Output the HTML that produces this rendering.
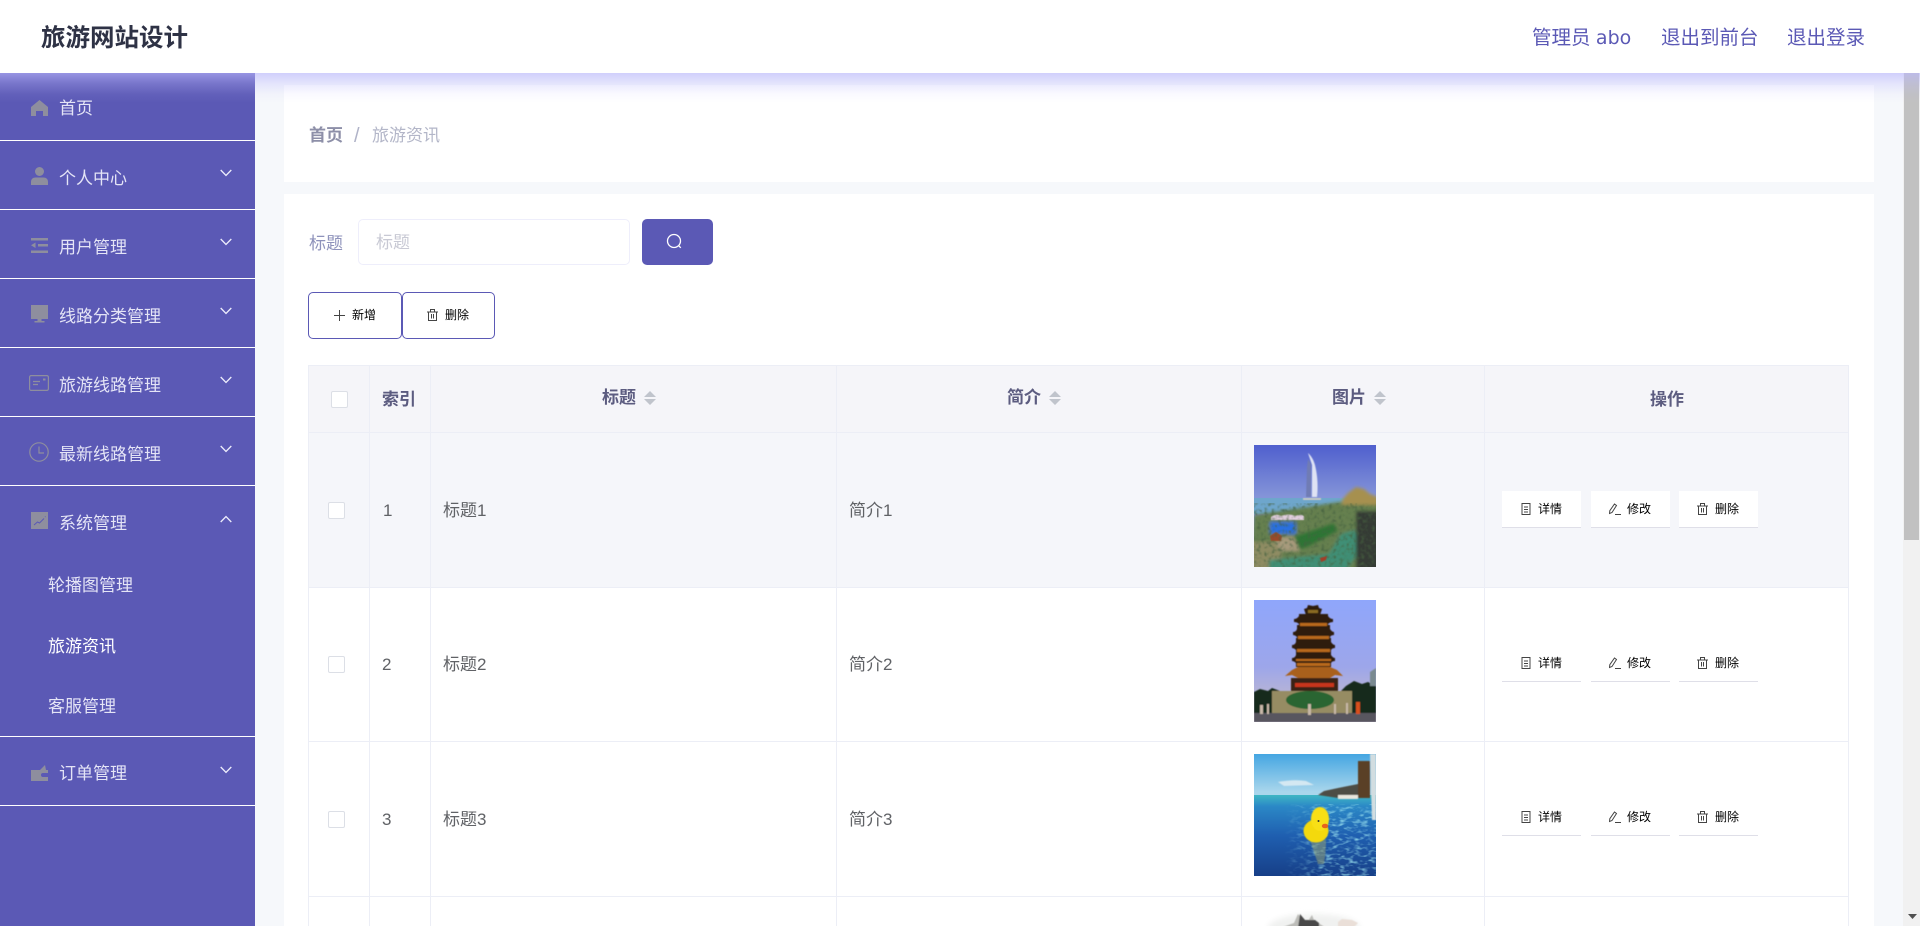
<!DOCTYPE html>
<html lang="zh"><head><meta charset="utf-8"><title>旅游网站设计</title>
<style>
*{box-sizing:border-box}
html,body{margin:0;padding:0;width:1920px;height:926px;overflow:hidden;background:#f6f8fb;font-family:"WenQuanYi Zen Hei","Liberation Sans","Noto Sans CJK SC",sans-serif}
#root{position:relative;width:1920px;height:926px;overflow:hidden;background:#f6f8fb}
.a,.t{position:absolute}
.t{white-space:nowrap;line-height:24px;font-size:17px}
.side{left:0;top:73px;width:255px;height:853px;background:#5b59b5}
.ln{left:0;width:255px;height:1px;background:#fff}
.s{left:59px;color:#e4e4f6}
.sub{left:48px;color:#e4e4f6}
.ic{position:absolute;fill:#8e8e9e}
.chev{position:absolute;left:220px;fill:none;stroke:#eeeefc;stroke-width:1.3}
.card{background:#fff;left:284px;width:1590px}
.th{font-weight:700;color:#5c5c80;font-size:17px}
.hl{background:#eceef6;width:1px}
.hh{background:#eceef6;height:1px;left:308px;width:1541px}
.cb{position:absolute;width:17px;height:17px;background:#fff;border:1px solid #dcdfe6;border-radius:2px}
.td{color:#606266;font-size:17px}
.sort{position:absolute;width:12px;height:14px}
.op{position:absolute;width:79px;height:37px;background:#fff;border-bottom:1.5px solid #dfdfe8}
.opt{font-size:12px;color:#000}
.oi{position:absolute;fill:none;stroke:#444;stroke-width:1}
.pic{position:absolute;left:1254px;width:122px;height:122px}
</style></head><body><div id="root">

<div class="a card" style="top:85px;height:97px"></div>
<div class="a card" style="top:194px;height:732px"></div>

<!-- breadcrumb -->
<div class="t" style="left:309px;top:124px;font-weight:700;color:#8d8fa8">首页</div>
<div class="t" style="left:354px;top:124px;color:#b0b3c8;font-size:20px">/</div>
<div class="t" style="left:372px;top:124px;color:#b3b6c8">旅游资讯</div>

<!-- search -->
<div class="t" style="left:309px;top:232px;color:#8e92bb">标题</div>
<div class="a" style="left:358px;top:219px;width:272px;height:46px;border:1px solid #eeeefb;border-radius:5px;background:#fff"></div>
<div class="t" style="left:376px;top:231px;color:#c8c9d4">标题</div>
<div class="a" style="left:642px;top:219px;width:71px;height:46px;border-radius:5px;background:#5b59b5"></div>
<svg class="a" style="left:666px;top:233px" width="17" height="17" viewBox="0 0 17 17" fill="none" stroke="#fff" stroke-width="1.3"><circle cx="8" cy="8" r="6.500"/><path d="M12.800 12.800l2 2"/></svg>

<!-- add / delete -->
<div class="a" style="left:308px;top:292px;width:94px;height:47px;border:1px solid #5b59b5;border-radius:5px;background:#fff"></div>
<div class="a" style="left:402px;top:292px;width:93px;height:47px;border:1px solid #5b59b5;border-radius:5px;background:#fff"></div>
<svg class="a" style="left:334px;top:310px" width="11" height="11" viewBox="0 0 11 11" stroke="#444" stroke-width="1"><path d="M5.500 0v11M0 5.500h11"/></svg>
<div class="t opt" style="left:352px;top:303px">新增</div>
<svg class="a oi" style="left:427px;top:309px" width="11" height="12" viewBox="0 0 11 12"><path d="M1.500 3h8v8.500h-8zM0 3h11M3.500 3V.5h4V3M4.500 5v4.500M6.500 5v4.500"/></svg>
<div class="t opt" style="left:445px;top:303px">删除</div>

<!-- table -->
<div class="a" style="left:308px;top:365px;width:1541px;height:67px;background:#f5f5f9"></div>
<div class="a" style="left:308px;top:432px;width:1541px;height:155px;background:#f5f6fa"></div>
<div class="a hh" style="top:365px"></div><div class="a hh" style="top:432px"></div><div class="a hh" style="top:587px"></div><div class="a hh" style="top:741px"></div><div class="a hh" style="top:896px"></div>
<div class="a hl" style="left:308px;top:365px;height:561px"></div>
<div class="a hl" style="left:369px;top:365px;height:561px"></div>
<div class="a hl" style="left:430px;top:365px;height:561px"></div>
<div class="a hl" style="left:836px;top:365px;height:561px"></div>
<div class="a hl" style="left:1241px;top:365px;height:561px"></div>
<div class="a hl" style="left:1484px;top:365px;height:561px"></div>
<div class="a hl" style="left:1848px;top:365px;height:561px"></div>

<div class="cb" style="left:331px;top:391px"></div>
<div class="t th" style="left:382px;top:388px">索引</div>
<div class="t th" style="left:602px;top:386px">标题</div>
<svg class="sort" style="left:644px;top:391px" viewBox="0 0 12 14" fill="#c0c4cc"><path d="M6 0l6 6H0zM0 8h12l-6 6z"/></svg>
<div class="t th" style="left:1007px;top:386px">简介</div>
<svg class="sort" style="left:1049px;top:391px" viewBox="0 0 12 14" fill="#c0c4cc"><path d="M6 0l6 6H0zM0 8h12l-6 6z"/></svg>
<div class="t th" style="left:1332px;top:386px">图片</div>
<svg class="sort" style="left:1374px;top:391px" viewBox="0 0 12 14" fill="#c0c4cc"><path d="M6 0l6 6H0zM0 8h12l-6 6z"/></svg>
<div class="t th" style="left:1650px;top:388px">操作</div>

<!-- row 1 -->
<div class="cb" style="left:328px;top:502px"></div>
<div class="t td" style="left:383px;top:499px">1</div>
<div class="t td" style="left:443px;top:499px">标题1</div>
<div class="t td" style="left:849px;top:499px">简介1</div>
<div class="op" style="left:1502px;top:491px"></div><div class="op" style="left:1591px;top:491px"></div><div class="op" style="left:1679px;top:491px"></div>
<svg class="oi" style="left:1521px;top:503px" width="10" height="12" viewBox="0 0 10 12"><path d="M1 .5h8v11H1zM3 4h4M3 6.500h4M3 9h4"/></svg>
<div class="t opt" style="left:1538px;top:497px">详情</div>
<svg class="oi" style="left:1609px;top:503px" width="13" height="12" viewBox="0 0 13 12"><path d="M5.500 1l2 1.500-4.500 7-2.500 1 .3-2.800zM6 11.500h6"/></svg>
<div class="t opt" style="left:1627px;top:497px">修改</div>
<svg class="oi" style="left:1697px;top:503px" width="11" height="12" viewBox="0 0 11 12"><path d="M1.500 3h8v8.500h-8zM0 3h11M3.500 3V.5h4V3M4.500 5v4.500M6.500 5v4.500"/></svg>
<div class="t opt" style="left:1715px;top:497px">删除</div>

<!-- row 2 -->
<div class="cb" style="left:328px;top:656px"></div>
<div class="t td" style="left:382px;top:653px">2</div>
<div class="t td" style="left:443px;top:653px">标题2</div>
<div class="t td" style="left:849px;top:653px">简介2</div>
<div class="op" style="left:1502px;top:645px"></div><div class="op" style="left:1591px;top:645px"></div><div class="op" style="left:1679px;top:645px"></div>
<svg class="oi" style="left:1521px;top:657px" width="10" height="12" viewBox="0 0 10 12"><path d="M1 .5h8v11H1zM3 4h4M3 6.500h4M3 9h4"/></svg>
<div class="t opt" style="left:1538px;top:651px">详情</div>
<svg class="oi" style="left:1609px;top:657px" width="13" height="12" viewBox="0 0 13 12"><path d="M5.500 1l2 1.500-4.500 7-2.500 1 .3-2.800zM6 11.500h6"/></svg>
<div class="t opt" style="left:1627px;top:651px">修改</div>
<svg class="oi" style="left:1697px;top:657px" width="11" height="12" viewBox="0 0 11 12"><path d="M1.500 3h8v8.500h-8zM0 3h11M3.500 3V.5h4V3M4.500 5v4.500M6.500 5v4.500"/></svg>
<div class="t opt" style="left:1715px;top:651px">删除</div>

<!-- row 3 -->
<div class="cb" style="left:328px;top:811px"></div>
<div class="t td" style="left:382px;top:808px">3</div>
<div class="t td" style="left:443px;top:808px">标题3</div>
<div class="t td" style="left:849px;top:808px">简介3</div>
<div class="op" style="left:1502px;top:799px"></div><div class="op" style="left:1591px;top:799px"></div><div class="op" style="left:1679px;top:799px"></div>
<svg class="oi" style="left:1521px;top:811px" width="10" height="12" viewBox="0 0 10 12"><path d="M1 .5h8v11H1zM3 4h4M3 6.500h4M3 9h4"/></svg>
<div class="t opt" style="left:1538px;top:805px">详情</div>
<svg class="oi" style="left:1609px;top:811px" width="13" height="12" viewBox="0 0 13 12"><path d="M5.500 1l2 1.500-4.500 7-2.500 1 .3-2.800zM6 11.500h6"/></svg>
<div class="t opt" style="left:1627px;top:805px">修改</div>
<svg class="oi" style="left:1697px;top:811px" width="11" height="12" viewBox="0 0 11 12"><path d="M1.500 3h8v8.500h-8zM0 3h11M3.500 3V.5h4V3M4.500 5v4.500M6.500 5v4.500"/></svg>
<div class="t opt" style="left:1715px;top:805px">删除</div>

<!-- picture 1 : tower and resort -->
<svg class="pic" style="top:445px" viewBox="0 0 122 122">
<defs>
<linearGradient id="s1" x1="0" y1="0" x2="0" y2="1"><stop offset="0" stop-color="#4f5fce"/><stop offset=".42" stop-color="#8494d8"/></linearGradient>
<filter id="b1"><feGaussianBlur stdDeviation="1.600"/></filter>
<filter id="b2"><feGaussianBlur stdDeviation=".45"/></filter>
<filter id="b3" x="-20%" y="-50%" width="140%" height="200%"><feGaussianBlur stdDeviation="3"/></filter>
<filter id="n1" x="0" y="0" width="100%" height="100%"><feTurbulence type="fractalNoise" baseFrequency=".28" numOctaves="2" seed="4"/><feColorMatrix values="0 0 0 0 .06 0 0 0 0 .12 0 0 0 0 .05 2.200 0 0 0 -1.050"/><feGaussianBlur stdDeviation=".5"/></filter>
<clipPath id="c1"><rect width="122" height="122"/></clipPath>
</defs>
<g clip-path="url(#c1)">
<rect width="122" height="122" fill="url(#s1)"/>
<rect y="53" width="122" height="16" fill="#6ea6cc"/>
<g filter="url(#b1)">
<path d="M0 70L40 64 85 57 130 54V130H-5z" fill="#66804f"/>
<path d="M88 55l6-7 8-6 8 2 6 5 8 3v8H88z" fill="#a6904f"/>
<path d="M16 77h26v12H16z" fill="#2c70e0"/>
<path d="M-5 97h32v30H-5z" fill="#8f8c64"/>
<path d="M38 92l42-14 4 8-30 16-14 4z" fill="#2f7534"/>
<path d="M15 127v-12l60-6 12-20 14-4 4 22-14 20z" fill="#3f8f76"/>
<path d="M102 66h24v60h-24z" fill="#343a36"/>
<path d="M20 92h20l6 14H26z" fill="#a79a7c"/>
</g>
<path d="M17 72q5-4 10-1 8-3 14 0 8-3 9 1v3H17z" fill="#e3cfe0" filter="url(#b2)"/>
<path d="M16 91l6-4 6 4-1 5H17z" fill="#9c4a2c" filter="url(#b2)"/>
<rect y="58" width="122" height="64" filter="url(#n1)"/>
<path d="M54 8c0 0 5 4 7 12 3 12 3 24 2 32h-5V20z" fill="#dfe3f4" filter="url(#b2)"/>
<path d="M54 14l3 5v33h-5l1-30z" fill="#6f7cb4" filter="url(#b2)"/>
<path d="M49 53h18v2H49z" fill="#c8c8c4" filter="url(#b2)"/>
<path d="M66 113l7-2-1 4-5 2z" fill="#a33c28" filter="url(#b2)"/>
</g>
</svg>

<!-- picture 2 : pagoda -->
<svg class="pic" style="top:600px" viewBox="0 0 122 122">
<defs>
<linearGradient id="s2" x1="0" y1="0" x2="0" y2="1"><stop offset="0" stop-color="#8fa6fb"/><stop offset=".55" stop-color="#9da6ea"/><stop offset=".85" stop-color="#bfb8cf"/></linearGradient>
</defs>
<rect width="122" height="122" fill="url(#s2)"/>
<g filter="url(#b2)">
<path d="M0 92l6-3 8 2 4-3 8 3 14 2v20H0zM84 94l8-8 8-5 8 3 6-2 8 4v28H84z" fill="#16291f"/>
<path d="M116 72l6-4v18h-6z" fill="#7a8a90"/>
<path d="M18 91h80v22H18z" fill="#968c64"/>
<ellipse cx="56" cy="100" rx="24" ry="9" fill="#2a6530"/>
<path d="M0 113h122v9H0z" fill="#58565e"/>
<path d="M37 78h47v13H37z" fill="#3b2314"/>
<path d="M41 83h39v4H41z" fill="#c8341c"/>
<path d="M31 76l7-6 6-3h32l7 3 6 6-8-1-5 3H44l-6-3z" fill="#a9601c"/>
<path d="M38 58q3 0 4-3V51h35v4q2 3 4 3v3q-3 0-4 2v4H42v-4q-2-2-4-2z" fill="#2e1c10"/>
<path d="M38 45q3 0 4-3V38h35v4q2 3 4 3v3q-3 0-4 2v4H42v-4q-2-2-4-2z" fill="#2e1c10"/>
<path d="M39 32q3 0 4-3V25h33v4q2 3 4 3v3q-3 0-4 2v4H43v-4q-2-2-4-2z" fill="#2e1c10"/>
<path d="M40 19q3 0 5-3V14h29v2q2 3 5 3v3q-3 0-5 2v4H45v-4q-2-2-5-2z" fill="#2e1c10"/>
<path d="M50 9l3-1 1-3 5 1 5-1 1 3 3 1-2 6H52z" fill="#2e1c10"/>
<path d="M43 63h33v3H43zM42 59h35v2H42zM43 49h33v3H43zM44 36h31v3H44zM46 23h27v3H46z" fill="#b8691f"/>
<path d="M54 10h10v3H54z" fill="#8a6a20"/>
<path d="M6 105h3v9H6zM13 104h2v10h-2zM54 104h3v11h-3zM80 104h2v10h-2zM92 103h2v11h-2z" fill="#c8b8a8"/>
<path d="M102 102h4v12h-4z" fill="#d8501c"/>
</g>
</svg>

<!-- picture 3 : duck -->
<svg class="pic" style="top:754px" viewBox="0 0 122 122">
<defs>
<linearGradient id="s3" x1="0" y1="0" x2="0" y2="1"><stop offset="0" stop-color="#45a6e2"/><stop offset=".9" stop-color="#a9d6ec"/></linearGradient>
<linearGradient id="w3" x1="0" y1="0" x2="0" y2="1"><stop offset="0" stop-color="#3fb6c4"/><stop offset=".14" stop-color="#2b88c6"/><stop offset=".5" stop-color="#1f5fb0"/><stop offset="1" stop-color="#173f88"/></linearGradient>
<filter id="n3" x="0" y="0" width="100%" height="100%"><feTurbulence type="fractalNoise" baseFrequency=".14 .3" numOctaves="2" seed="7"/><feColorMatrix values="0 0 0 0 .35 0 0 0 0 .8 0 0 0 0 .88 2.200 0 0 0 -1.050"/></filter>
<linearGradient id="m3" x1="0" y1="0" x2="1" y2="0"><stop offset="0" stop-color="#fff" stop-opacity="0"/><stop offset=".5" stop-color="#fff"/></linearGradient>
<mask id="mm3"><rect x="30" y="50" width="92" height="72" fill="url(#m3)"/></mask>
</defs>
<rect width="122" height="42" fill="url(#s3)"/>
<rect y="41" width="122" height="81" fill="url(#w3)"/>
<g mask="url(#mm3)"><rect x="30" y="50" width="92" height="72" filter="url(#n3)"/></g>
<g filter="url(#b2)">
<path d="M24 28q16-3 28-1l8 4-30 1z" fill="#d4e8f2"/>
<path d="M64 41l6-4 14-3 20-4v12l-20 2z" fill="#4d4d45"/>
<path d="M84 41h20v4H84z" fill="#e8e6dc"/>
<path d="M104 7h12v37h-12z" fill="#5a4028"/>
<path d="M116 0h6v66h-4z" fill="#d2dde0"/>
<path d="M56 86q4 12 8 24l6 0q2-12 2-24z" fill="#a9b06a" opacity=".45"/>
</g>
<ellipse cx="62" cy="77" rx="12.500" ry="11.500" fill="#f4d90a" filter="url(#b2)"/>
<ellipse cx="66" cy="65" rx="9" ry="12" fill="#f8df12" filter="url(#b2)"/>
<circle cx="64.500" cy="67" r="1" fill="#333"/>
<ellipse cx="71" cy="72" rx="3.200" ry="2.300" fill="#e8641a"/>
</svg>

<!-- picture 4 : ink painting, clipped to the visible strip -->
<svg class="a" style="left:1254px;top:908px" width="122" height="18" viewBox="0 0 122 18">
<ellipse cx="60" cy="20" rx="46" ry="14" fill="#f0f1f0" filter="url(#b3)"/>
<g filter="url(#b2)">
<path d="M26 20l14-5 4-9 4 5 6 2 4-6 2 5 6 4 6 4v2H26z" fill="#bcbcb8"/>
<path d="M46 6l5 6h10l4 3v5H44z" fill="#4a4a48"/>
<path d="M84 14l4-3 10 1 6 3-4 4H84z" fill="#eadfd8"/>
</g>
</svg>

<!-- sidebar -->
<div class="a side"></div>
<div class="a ln" style="top:140px"></div><div class="a ln" style="top:209px"></div><div class="a ln" style="top:278px"></div><div class="a ln" style="top:347px"></div><div class="a ln" style="top:416px"></div><div class="a ln" style="top:485px"></div><div class="a ln" style="top:736px"></div><div class="a ln" style="top:805px"></div>

<svg class="ic" style="left:31px;top:100px" width="17" height="16" viewBox="0 0 17 16"><path d="M8.500 0L17 7v9h-5v-5H5v5H0V7z"/></svg>
<div class="t s" style="top:97px">首页</div>

<svg class="ic" style="left:31px;top:167px" width="17" height="18" viewBox="0 0 17 18"><circle cx="8.500" cy="4.500" r="4.500"/><path d="M0 18v-3c0-3 2-4.500 4.500-4.500h8c2.500 0 4.500 1.500 4.500 4.500v3z"/></svg>
<div class="t s" style="top:167px">个人中心</div>
<svg class="chev" style="top:169px" width="12" height="8" viewBox="0 0 12 8"><path d="M.7 1L6 6.500 11.300 1"/></svg>

<svg class="ic" style="left:31px;top:238px" width="17" height="15" viewBox="0 0 17 15"><path d="M0 0h17v2.500H0zM7 6h10v2.500H7zM0 12.500h17V15H0zM4.500 4.500v5.500L0 7.200z"/></svg>
<div class="t s" style="top:236px">用户管理</div>
<svg class="chev" style="top:238px" width="12" height="8" viewBox="0 0 12 8"><path d="M.7 1L6 6.500 11.300 1"/></svg>

<svg class="ic" style="left:31px;top:305px" width="17" height="18" viewBox="0 0 17 18"><path d="M0 0h17v14H0zM6.500 14h4v2h3v1.500h-10V16h3z"/></svg>
<div class="t s" style="top:305px">线路分类管理</div>
<svg class="chev" style="top:307px" width="12" height="8" viewBox="0 0 12 8"><path d="M.7 1L6 6.500 11.300 1"/></svg>

<svg class="a" style="left:29px;top:375px" width="20" height="16" viewBox="0 0 20 16" fill="none" stroke="#8e8e9e" stroke-width="1.200"><rect x=".6" y=".6" width="18.800" height="14.800" rx="1.500"/><path d="M4 6.500h7M4 9.500h5"/><path d="M14 4.500h2.500" stroke-width="2"/></svg>
<div class="t s" style="top:374px">旅游线路管理</div>
<svg class="chev" style="top:376px" width="12" height="8" viewBox="0 0 12 8"><path d="M.7 1L6 6.500 11.300 1"/></svg>

<svg class="a" style="left:29px;top:442px" width="20" height="20" viewBox="0 0 20 20" fill="none" stroke="#8e8e9e" stroke-width="1.200"><circle cx="10" cy="10" r="9.200"/><path d="M10 4.500V11h5"/></svg>
<div class="t s" style="top:443px">最新线路管理</div>
<svg class="chev" style="top:445px" width="12" height="8" viewBox="0 0 12 8"><path d="M.7 1L6 6.500 11.300 1"/></svg>

<svg class="a" style="left:31px;top:512px" width="17" height="17" viewBox="0 0 17 17"><rect width="17" height="17" fill="#8e8e9e"/><path d="M3 13l3.500-3 2 1L13 6.500M14 5l.5-.5" fill="none" stroke="#5b59b5" stroke-width="1"/></svg>
<div class="t s" style="top:512px">系统管理</div>
<svg class="chev" style="top:515px" width="12" height="8" viewBox="0 0 12 8"><path d="M.7 7L6 1.500 11.300 7"/></svg>

<div class="t sub" style="top:574px">轮播图管理</div>
<div class="t sub" style="top:635px;color:#fff">旅游资讯</div>
<div class="t sub" style="top:695px">客服管理</div>

<svg class="ic" style="left:31px;top:764px" width="17" height="17" viewBox="0 0 17 17"><path d="M0 6h9l5-5 1 5h2v3h-5a2 2 0 0 0 0 4h5v4H0z"/></svg>
<div class="t s" style="top:762px">订单管理</div>
<svg class="chev" style="top:766px" width="12" height="8" viewBox="0 0 12 8"><path d="M.7 1L6 6.500 11.300 1"/></svg>

<!-- scrollbar -->
<div class="a" style="left:1903px;top:73px;width:17px;height:853px;background:#f1f1f1"></div>
<div class="a" style="left:1904px;top:73px;width:15px;height:467px;background:#c1c1c1"></div>
<svg class="a" style="left:1908px;top:914px" width="9" height="5" viewBox="0 0 9 5"><path d="M0 0h9L4.500 5z" fill="#505050"/></svg>

<!-- header shadow -->
<div class="a" style="left:0;top:73px;width:1920px;height:30px;background:linear-gradient(to bottom,rgba(186,183,253,.63) 0,rgba(186,183,253,.3) 35%,rgba(186,183,253,.08) 70%,rgba(186,183,253,0) 100%)"></div>

<!-- header -->
<div class="a" style="left:0;top:0;width:1920px;height:73px;background:#fff"></div>
<div class="t" style="left:41px;top:27px;font-size:24.500px;font-weight:700;color:#2e3245">旅游网站设计</div>
<div class="t" style="left:1532px;top:26px;font-size:19.500px;color:#5b59b5">管理员 <span style="font-family:'DejaVu Sans',sans-serif;font-size:19px">abo</span></div>
<div class="t" style="left:1661px;top:26px;font-size:19.500px;color:#5b59b5">退出到前台</div>
<div class="t" style="left:1787px;top:26px;font-size:19.500px;color:#5b59b5">退出登录</div>
</div></body></html>
